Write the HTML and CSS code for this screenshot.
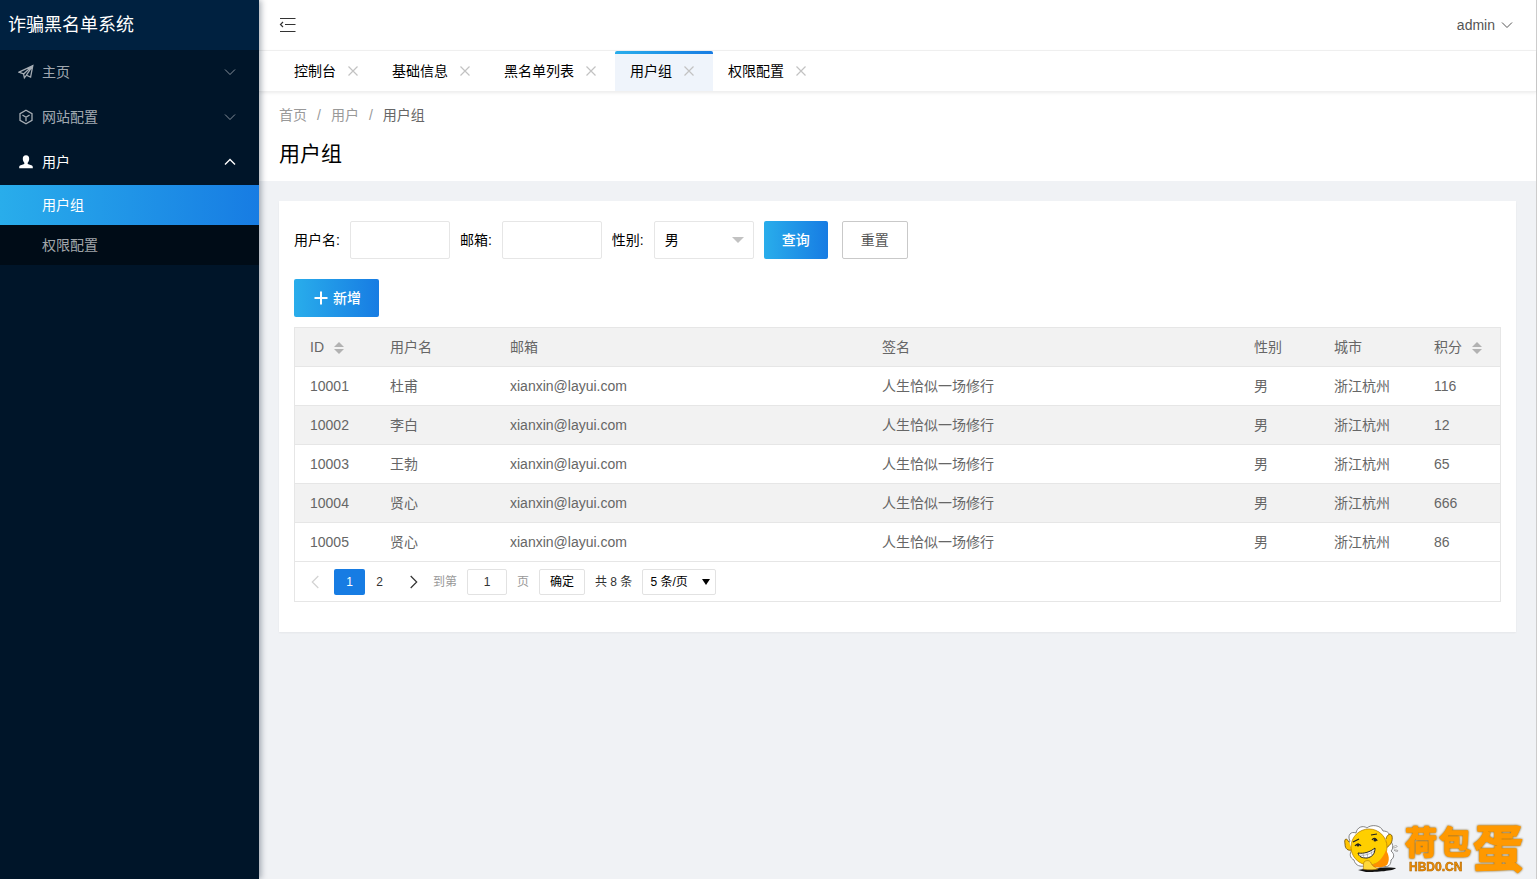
FILE: index.html
```html
<!DOCTYPE html>
<html lang="zh-CN">
<head>
<meta charset="utf-8">
<title>诈骗黑名单系统</title>
<link rel="stylesheet" href="styles.css">
</head>
<body>
<div class="app">
  <aside class="sidebar">
    <h1 class="brand">诈骗黑名单系统</h1>
    <nav class="menu">
      <a class="menu-item" href="#">
        <svg class="menu-icon" viewBox="0 0 16 16"><path d="M1 8.2 14.8 1.6 12.6 13 8.4 11.2 6.4 13.8 5.6 10 1 8.2ZM5.6 10 14.8 1.6 8.4 11.2"/></svg>
        <span>主页</span>
        <svg class="menu-arrow" viewBox="0 0 12 12"><path d="m1 3.5 5 5 5-5"/></svg>
      </a>
      <a class="menu-item" href="#">
        <svg class="menu-icon" viewBox="0 0 16 16"><path d="M8 1.2 14 4.6v6.8L8 14.8 2 11.4V4.6ZM4.4 6 8 8.2 11.6 6M8 8.2v4"/></svg>
        <span>网站配置</span>
        <svg class="menu-arrow" viewBox="0 0 12 12"><path d="m1 3.5 5 5 5-5"/></svg>
      </a>
      <a class="menu-item open" href="#">
        <svg class="menu-icon solid" viewBox="0 0 16 16"><path d="M8 1.3c2.200 0 3.200 1.500 3.200 3.500 0 1.700-.7 3.200-1.500 4v1.300l3.600 1.200c1.100.4 1.500.9 1.500 2.200v.8H1.200v-.8c0-1.300.4-1.800 1.500-2.200l3.600-1.200V8.800c-.8-.8-1.500-2.300-1.500-4 0-2 1-3.500 3.200-3.500Z"/></svg>
        <span>用户</span>
        <svg class="menu-arrow" viewBox="0 0 12 12"><path d="m1 8.500 5-5 5 5"/></svg>
      </a>
      <div class="submenu">
        <a class="submenu-item current" href="#">用户组</a>
        <a class="submenu-item" href="#">权限配置</a>
      </div>
    </nav>
  </aside>

  <div class="main">
    <header class="topbar">
      <button class="icon-button" type="button" aria-label="收起菜单">
        <svg class="fold-icon" viewBox="0 0 18 16"><path d="M1 1.500H16.500M6 7.500H16.500M1 14.500H16.500M4 5 1.500 7.500 4 10"/></svg>
      </button>
      <button class="account" type="button">admin
        <svg class="account-arrow" viewBox="0 0 12 12"><path d="m1 3.500 5 5 5-5"/></svg>
      </button>
    </header>

    <nav class="tabs">
      <a class="tab" href="#">控制台<svg class="close" viewBox="0 0 10 10"><path d="m.5.5 9 9m0-9-9 9"/></svg></a>
      <a class="tab" href="#">基础信息<svg class="close" viewBox="0 0 10 10"><path d="m.5.5 9 9m0-9-9 9"/></svg></a>
      <a class="tab" href="#">黑名单列表<svg class="close" viewBox="0 0 10 10"><path d="m.5.5 9 9m0-9-9 9"/></svg></a>
      <a class="tab active" href="#">用户组<svg class="close" viewBox="0 0 10 10"><path d="m.5.5 9 9m0-9-9 9"/></svg></a>
      <a class="tab" href="#">权限配置<svg class="close" viewBox="0 0 10 10"><path d="m.5.5 9 9m0-9-9 9"/></svg></a>
    </nav>

    <div class="page-head">
      <nav class="crumbs"><a href="#">首页</a><span class="slash">/</span><a href="#">用户</a><span class="slash">/</span><span class="here">用户组</span></nav>
      <h2 class="page-title">用户组</h2>
    </div>

    <main class="card">
      <form class="search">
        <label for="name">用户名:</label>
        <input class="field" id="name" type="text">
        <label for="mail">邮箱:</label>
        <input class="field" id="mail" type="text">
        <label for="sex">性别:</label>
        <span class="select-wrap">
          <select class="field" id="sex"><option>男</option><option>女</option></select>
        </span>
        <button class="btn primary" type="button">查询</button>
        <button class="btn plain" type="reset">重置</button>
      </form>

      <button class="btn primary add" type="button"><svg class="plus" viewBox="0 0 14 14"><path d="M7 .5v13M.5 7h13"/></svg>新增</button>

      <div class="grid">
        <table class="users">
          <colgroup><col class="w80"><col class="w120"><col><col><col class="w80"><col class="w100"><col class="w81"></colgroup>
          <thead>
            <tr><th>ID<span class="sort"></span></th><th>用户名</th><th>邮箱</th><th>签名</th><th>性别</th><th>城市</th><th>积分<span class="sort"></span></th></tr>
          </thead>
          <tbody>
            <tr><td>10001</td><td>杜甫</td><td>xianxin@layui.com</td><td>人生恰似一场修行</td><td>男</td><td>浙江杭州</td><td>116</td></tr>
            <tr><td>10002</td><td>李白</td><td>xianxin@layui.com</td><td>人生恰似一场修行</td><td>男</td><td>浙江杭州</td><td>12</td></tr>
            <tr><td>10003</td><td>王勃</td><td>xianxin@layui.com</td><td>人生恰似一场修行</td><td>男</td><td>浙江杭州</td><td>65</td></tr>
            <tr><td>10004</td><td>贤心</td><td>xianxin@layui.com</td><td>人生恰似一场修行</td><td>男</td><td>浙江杭州</td><td>666</td></tr>
            <tr><td>10005</td><td>贤心</td><td>xianxin@layui.com</td><td>人生恰似一场修行</td><td>男</td><td>浙江杭州</td><td>86</td></tr>
          </tbody>
        </table>
        <div class="pager">
          <button class="page prev" type="button" aria-label="上一页" disabled><svg class="chevron" viewBox="0 0 8 14"><path d="M7.300 1 1.300 7l6 6"/></svg></button>
          <button class="page now" type="button">1</button>
          <button class="page" type="button">2</button>
          <button class="page next" type="button" aria-label="下一页"><svg class="chevron" viewBox="0 0 8 14"><path d="m.7 1 6 6-6 6"/></svg></button>
          <label class="muted" for="goto">到第</label>
          <input class="box goto" id="goto" type="text" value="1">
          <span class="muted">页</span>
          <button class="box ok" type="button">确定</button>
          <span>共 8 条</span>
          <span class="select-wrap small">
            <select class="box size" aria-label="每页条数"><option>5 条/页</option><option>10 条/页</option></select>
          </span>
        </div>
      </div>
    </main>
  </div>
</div>

<svg class="mark" viewBox="0 0 190 56" role="img" aria-label="荷包蛋 HBD0.CN">
  <path d="M16 50c10-2 24-3 38-2-2 3-20 4-30 4Z" fill="#111" stroke="none"/>
  <path d="M8 21C5 15 9 11 14 13c1-6 7-8 11-5 4-4 14-3 16 3 5 0 8 3 6 8 4 4 5 9 2 12 4 3 3 7 0 9 0 5-3 8-8 6-6 4-14 4-19 0-6 1-9-2-10-6-4-2-5-6-2-10-3-3-4-6-2-9Z" fill="#fff" stroke="#666" stroke-width=".8"/>
  <path d="M7 22c-3-5-5-3-4 2 0 5 3 7 7 6M44 19c1-5 5-6 6-3 1 5-1 9-6 12" fill="#ffc400" stroke="#6b4a00" stroke-width=".8"/>
  <circle cx="27" cy="27" r="18" fill="#ffcf00" stroke="#b27b00" stroke-width=".7"/>
  <path d="M44 30c3 5 4 10 1 15-4 3-12 3-18 1 9-2 14-8 17-16Z" fill="#ff8f00" stroke="none"/>
  <path d="M22 42c2-2 6-2 7 1 1 3 4 4 7 6-4 1-13 1-15 0 1-2 0-5 1-7Z" fill="#ffd83a" stroke="#a87000" stroke-width=".6"/>
  <path d="M16 33c6 1 12-1 17-5 0 6-3 9-8 10-5 0-8-1-9-5Z" fill="#fff" stroke="#222"/>
  <path d="M17 35c6 1 11-1 15-4M21 34l1 4m3-5 1 5m3-7 1 4" stroke="#888" stroke-width=".6"/>
  <path d="m11 22 6-3m12-4 6-1M13 26c2-3 5-2 6 0m11-6c2-3 5-1 5 1" stroke="#222" stroke-width="1.200"/>
  <circle cx="16" cy="25" r="1.500" fill="#222" stroke="none"/><circle cx="33" cy="20" r="1.500" fill="#222" stroke="none"/>
  <path d="M50 28c2-2 4-3 5-2s-2 2-5 2Zm2 2c2 0 4 0 4 1-1 1-3 0-4-1Z" fill="#fff" stroke="#777" stroke-width=".6"/>
  <g class="mark-name"><text x="63" y="34" font-size="32">荷</text><text x="97" y="34" font-size="32">包</text><text x="131" y="47" font-size="50">蛋</text></g>
  <text class="mark-url" x="67" y="51">HBD0.CN</text>
</svg>
</body>
</html>
```
FILE: styles.css
```css
* { box-sizing: border-box; }
body {
  margin: 0;
  background: #f0f2f5;
  color: #000;
  font: 14px/24px "Liberation Sans", "Noto Sans CJK SC", sans-serif;
}
a { color: inherit; text-decoration: none; }
button, input, select { margin: 0; font: inherit; color: inherit; }
button { cursor: pointer; }
svg { flex: none; fill: none; stroke: currentColor; }

.app { display: flex; min-height: 100vh; }

.sidebar {
  position: relative;
  z-index: 1;
  flex: none;
  width: 259px;
  background: #001529;
  box-shadow: 2px 0 6px rgba(0, 21, 41, .35);
}
.brand {
  margin: 0;
  padding: 1px 0 0 8px;
  background: #002140;
  color: #fff;
  font-size: 18px;
  font-weight: 400;
  line-height: 49px;
}
.menu-item {
  display: flex;
  align-items: center;
  gap: 8px;
  height: 45px;
  padding: 0 23px 2px 18px;
  color: rgba(255, 255, 255, .65);
}
.menu-item.open { color: #fff; }
.menu-icon { width: 16px; height: 16px; stroke-width: 1.3; }
.menu-icon.solid { fill: currentColor; stroke: none; }
.menu-arrow { width: 12px; height: 12px; margin-left: auto; opacity: .8; }
.open .menu-arrow { opacity: 1; stroke-width: 1.4; }
.submenu { background: #000c17; }
.submenu-item {
  display: block;
  padding-left: 42px;
  line-height: 40px;
  color: rgba(255, 255, 255, .65);
}
.submenu-item.current { color: #fff; background: linear-gradient(to right, #29adeb, #177ce3); }

.main { flex: 1; min-width: 0; border-right: 1px solid #ccc; }
.topbar {
  display: flex;
  align-items: center;
  justify-content: space-between;
  height: 51px;
  padding: 0 23px 0 20px;
  background: #fff;
  border-bottom: 1px solid #f2f2f2;
}
.icon-button, .account { padding: 0; border: 0; background: none; color: #333; }
.icon-button { display: flex; }
.fold-icon { width: 18px; height: 16px; stroke-width: 1.2; }
.account { display: flex; align-items: center; gap: 6px; color: #555; }
.account-arrow { width: 12px; height: 12px; }

.tabs {
  display: flex;
  height: 41px;
  padding-left: 20px;
  background: #fff;
  border-bottom: 1px solid #f0f0f0;
  box-shadow: 0 1px 3px rgba(0, 0, 0, .08);
  position: relative;
}
.tab {
  display: flex;
  align-items: center;
  gap: 12px;
  padding: 0 19px 0 15px;
  border-top: 3px solid transparent;
  border-bottom: 3px solid transparent;
}
.tab.active {
  background: linear-gradient(to right, #29adeb, #177ce3) top / 100% 3px no-repeat border-box, #eff4fb;
  border-radius: 2px 2px 0 0;
}
.close { width: 10px; height: 10px; color: #c2c2c2; stroke-width: 1.2; }

.page-head { padding: 11px 20px 12px; background: #fff; }
.crumbs { display: flex; gap: 10px; color: #999; }
.here { color: #666; }
.page-title { margin: 12px 0 0; font-size: 21px; font-weight: 400; line-height: 30px; }

.card {
  margin: 20px;
  padding: 20px 15px 30px;
  background: #fff;
  box-shadow: 0 1px 2px rgba(0, 0, 0, .05);
}
.search { display: flex; align-items: center; gap: 10px; margin-bottom: 20px; }
.field {
  width: 100px;
  height: 38px;
  padding: 0 10px;
  border: 1px solid #e6e6e6;
  border-radius: 2px;
  background: #fff;
}
select { appearance: none; }
.select-wrap { position: relative; display: flex; }
.select-wrap::after {
  content: "";
  position: absolute;
  top: 16px;
  right: 10px;
  border: 6px solid transparent;
  border-top-color: #c2c2c2;
  border-bottom: 0;
  pointer-events: none;
}
.btn { height: 38px; padding: 0 18px; border: 0; border-radius: 2px; }
.btn.primary { color: #fff; font-weight: 500; background: linear-gradient(to right, #29adeb, #177ce3); }
.btn.plain { margin-left: 4px; border: 1px solid #c9c9c9; background: #fff; color: #555; }
.btn.add { display: flex; align-items: center; gap: 5px; margin-bottom: 10px; padding: 0 18px 0 20px; }
.plus { width: 14px; height: 14px; stroke-width: 2; }

.grid { border: 1px solid #e6e6e6; color: #666; }
.users { width: 100%; table-layout: fixed; border-collapse: separate; border-spacing: 0; }
.w80 { width: 80px; }
.w81 { width: 81px; }
.w120 { width: 120px; }
.w100 { width: 100px; }
.users th, .users td {
  height: 39px;
  padding: 0 15px;
  border-bottom: 1px solid #e6e6e6;
  font-weight: 400;
  text-align: left;
  white-space: nowrap;
}
.users thead tr, .users tbody tr:nth-child(even) { background: #f2f2f2; }
.sort {
  display: inline-flex;
  flex-direction: column;
  gap: 2px;
  margin-left: 10px;
  vertical-align: middle;
}
.sort::before, .sort::after { content: ""; border: 5px solid transparent; }
.sort::before { border-top: 0; border-bottom-color: #b2b2b2; }
.sort::after { border-bottom: 0; border-top-color: #b2b2b2; }

.pager {
  display: flex;
  align-items: center;
  gap: 10px;
  height: 39px;
  padding-left: 5px;
  color: #333;
  font-size: 12px;
}
.page { width: 31px; height: 26px; padding: 0; border: 0; border-radius: 2px; background: none; }
.page + .page { margin-left: -11px; }
.page.prev { color: #d2d2d2; width: 30px; }
.page.prev + .page { margin-left: -6px; }
.page.now { background: #177ce3; color: #fff; }
.page.now + .page + .next { width: 30px; margin: 0 -6px; }
.chevron { display: block; width: 8px; height: 14px; margin: 0 auto; stroke-width: 1.2; }
.muted { color: #999; }
.box { height: 26px; padding: 0; border: 1px solid #e2e2e2; border-radius: 2px; background: #fff; }
.goto { width: 40px; text-align: center; }
.ok { width: 46px; color: #000; }
.size { width: 74px; padding-left: 7px; color: #000; }
.small::after { top: 10px; right: 6px; border-width: 6px 4px 0; border-top-color: #000; }

.mark { position: fixed; right: 5px; bottom: 3px; width: 190px; height: 56px; overflow: visible; }
.mark-name {
  fill: #ff9900;
  stroke: #ff9900;
  stroke-width: 1.5px;
  stroke-linejoin: round;
  font-family: "Noto Sans CJK SC", sans-serif;
  font-weight: 700;
  filter: drop-shadow(0 0 1px #7a5200);
}
.mark-url { fill: #f08c00; stroke: #a86400; stroke-width: .5px; font-size: 12px; font-weight: 700; }
```
